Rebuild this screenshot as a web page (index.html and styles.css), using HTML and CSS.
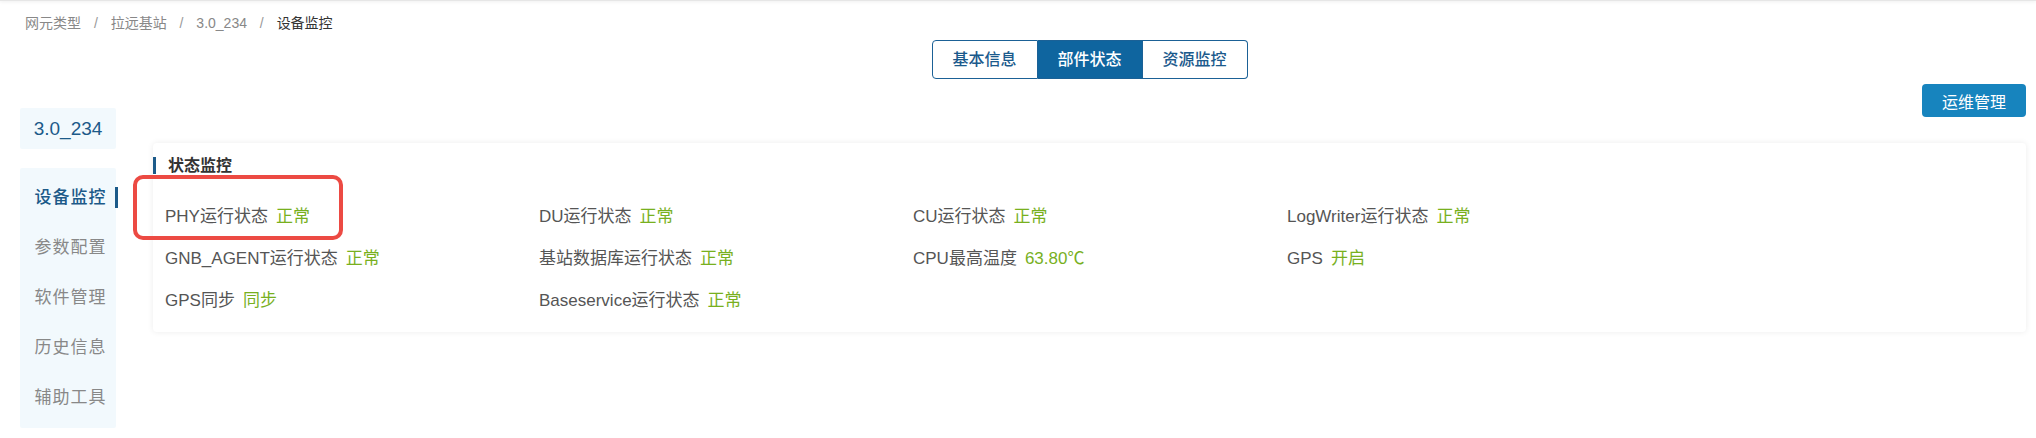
FILE: index.html
```html
<!DOCTYPE html>
<html lang="zh-CN">
<head>
    <meta charset="UTF-8">
    <title>设备监控</title>
    <link rel="stylesheet" href="styles.css">
</head>
<body>
    <div class="topbar"></div>

    <!-- 面包屑 -->
    <div class="breadcrumb">
        <span class="crumb">网元类型</span>
        <span class="sep">/</span>
        <span class="crumb">拉远基站</span>
        <span class="sep">/</span>
        <span class="crumb">3.0_234</span>
        <span class="sep">/</span>
        <span class="crumb current">设备监控</span>
    </div>

    <div class="layout">
        <!-- 左侧菜单 -->
        <div class="sidebar">
            <div class="side-title">3.0_234</div>
            <ul class="side-menu">
                <li class="active">设备监控</li>
                <li>参数配置</li>
                <li>软件管理</li>
                <li>历史信息</li>
                <li>辅助工具</li>
            </ul>
        </div>

        <div class="main">
            <div class="tabs">
                <div class="tab">基本信息</div>
                <div class="tab active">部件状态</div>
                <div class="tab">资源监控</div>
            </div>

            <div class="toolbar">
                <button class="btn-primary">运维管理</button>
            </div>

            <div class="card">
                <div class="card-title">状态监控</div>
                <div class="status-grid">
                    <div class="item"><span class="label">PHY运行状态</span><span class="value">正常</span></div>
                    <div class="item"><span class="label">DU运行状态</span><span class="value">正常</span></div>
                    <div class="item"><span class="label">CU运行状态</span><span class="value">正常</span></div>
                    <div class="item"><span class="label">LogWriter运行状态</span><span class="value">正常</span></div>
                    <div class="item"></div>

                    <div class="item"><span class="label">GNB_AGENT运行状态</span><span class="value">正常</span></div>
                    <div class="item"><span class="label">基站数据库运行状态</span><span class="value">正常</span></div>
                    <div class="item"><span class="label">CPU最高温度</span><span class="value">63.80℃</span></div>
                    <div class="item"><span class="label">GPS</span><span class="value">开启</span></div>
                    <div class="item"></div>

                    <div class="item"><span class="label">GPS同步</span><span class="value">同步</span></div>
                    <div class="item"><span class="label">Baseservice运行状态</span><span class="value">正常</span></div>
                </div>
                <!-- 标注框 -->
                <div class="highlight"></div>
            </div>
        </div>
    </div>
</body>
</html>
```

FILE: styles.css
```css
body {
    margin: 0;
    font-family: "Liberation Sans", "Noto Sans CJK SC", sans-serif;
    color: #333;
    background: #fff;
}
.topbar {
    height: 1px;
    background: #e6e6e6;
    box-shadow: 0 1px 3px rgba(0, 0, 0, 0.12);
}
.breadcrumb {
    padding: 12px 0 7px 25px;
    font-size: 14px;
    line-height: 20px;
    color: #888;
}
.breadcrumb .sep {
    margin: 0 9px;
    color: #999;
}
.breadcrumb .current {
    color: #333;
}
.layout {
    display: flex;
    align-items: flex-start;
    padding: 0 10px 0 20px;
}
.sidebar {
    width: 96px;
    flex-shrink: 0;
    padding-top: 68px;
}
.side-title {
    height: 41px;
    line-height: 41px;
    text-align: center;
    font-size: 19px;
    color: #1c5a89;
    background: #f2f9fd;
    border-radius: 2px;
}
.side-menu {
    list-style: none;
    margin: 19px 0 0;
    padding: 5px 0;
    background: #f2f9fd;
    border-radius: 2px;
}
.side-menu li {
    position: relative;
    height: 50px;
    line-height: 50px;
    padding-left: 5px;
    text-align: center;
    font-size: 17px;
    letter-spacing: 1px;
    color: #888;
}
.side-menu li.active {
    color: #1c5a89;
    font-weight: 500;
}
.side-menu li.active::after {
    content: "";
    position: absolute;
    right: -2px;
    top: 14px;
    width: 3px;
    height: 21px;
    background: #1c5a89;
}
.main {
    flex: 1;
    min-width: 0;
    margin-left: 37px;
}
.tabs {
    display: flex;
    justify-content: center;
}
.tab {
    width: 104px;
    height: 37px;
    line-height: 37px;
    text-align: center;
    font-size: 16px;
    font-weight: 500;
    color: #1b5a8c;
    border: 1px solid #1b6196;
    border-left: none;
}
.tab:first-child {
    border-left: 1px solid #1b6196;
    border-radius: 4px 0 0 4px;
}
.tab:last-child {
    border-radius: 0 4px 4px 0;
}
.tab.active {
    background: #0f659f;
    color: #fff;
}
.toolbar {
    display: flex;
    justify-content: flex-end;
    margin-top: 5px;
}
.btn-primary {
    width: 104px;
    height: 33px;
    border: none;
    border-radius: 4px;
    background: #1784be;
    color: #fff;
    font-family: inherit;
    font-size: 16px;
    cursor: pointer;
}
.card {
    position: relative;
    margin-top: 26px;
    padding: 14px 0 10px;
    background: #fff;
    border-radius: 4px;
    box-shadow: 0 0 6px rgba(0, 0, 0, 0.08);
}
.card-title {
    height: 17px;
    line-height: 17px;
    padding-left: 12px;
    border-left: 3px solid #1c5a89;
    font-size: 16px;
    font-weight: bold;
    color: #333;
}
.status-grid {
    display: grid;
    grid-template-columns: repeat(4, 374px) 1fr;
    grid-auto-rows: 42px;
    margin-top: 22px;
    padding-left: 12px;
}
.item {
    line-height: 42px;
    font-size: 17px;
    white-space: nowrap;
}
.item .label {
    color: #555;
}
.item .value {
    margin-left: 8px;
    color: #78b01e;
}
.highlight {
    position: absolute;
    left: -20px;
    top: 32px;
    width: 202px;
    height: 57px;
    border: 4px solid #ec4a43;
    border-radius: 10px;
}
```
